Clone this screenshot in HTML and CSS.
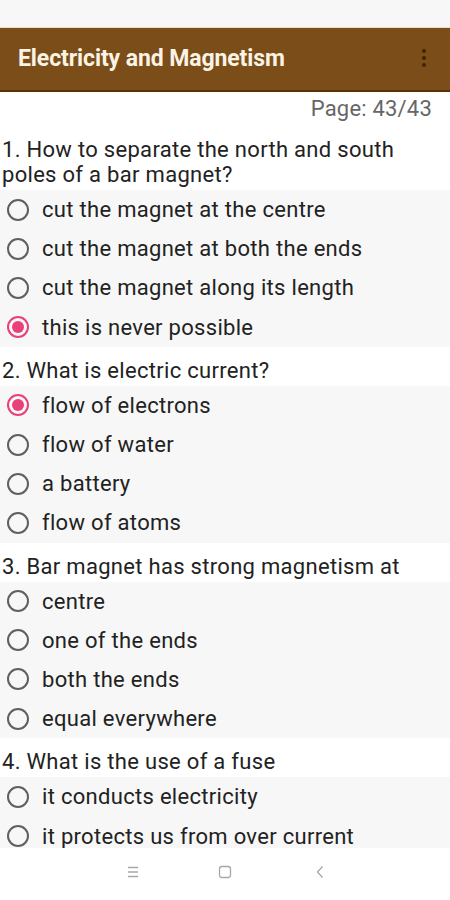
FILE: index.html
```html
<!DOCTYPE html>
<html>
<head>
<meta charset="utf-8">
<link rel="stylesheet" href="styles.css">
</head>
<body>
<div class="screen">
  <div class="statusbar"></div>
  <div class="toolbar">
    <div class="title">Electricity and Magnetism</div>
    <div class="menu"><span></span><span></span><span></span></div>
  </div>
  <div class="content">
    <div class="page">Page: 43/43</div>

    <div class="question">1. How to separate the north and south poles of a bar magnet?</div>
    <div class="options">
      <div class="option"><span class="radio"></span><span class="label">cut the magnet at the centre</span></div>
      <div class="option"><span class="radio"></span><span class="label">cut the magnet at both the ends</span></div>
      <div class="option"><span class="radio"></span><span class="label">cut the magnet along its length</span></div>
      <div class="option"><span class="radio checked"></span><span class="label">this is never possible</span></div>
    </div>

    <div class="question">2. What is electric current?</div>
    <div class="options">
      <div class="option"><span class="radio checked"></span><span class="label">flow of electrons</span></div>
      <div class="option"><span class="radio"></span><span class="label">flow of water</span></div>
      <div class="option"><span class="radio"></span><span class="label">a battery</span></div>
      <div class="option"><span class="radio"></span><span class="label">flow of atoms</span></div>
    </div>

    <div class="question">3. Bar magnet has strong magnetism at</div>
    <div class="options">
      <div class="option"><span class="radio"></span><span class="label">centre</span></div>
      <div class="option"><span class="radio"></span><span class="label">one of the ends</span></div>
      <div class="option"><span class="radio"></span><span class="label">both the ends</span></div>
      <div class="option"><span class="radio"></span><span class="label">equal everywhere</span></div>
    </div>

    <div class="question">4. What is the use of a fuse</div>
    <div class="options">
      <div class="option"><span class="radio"></span><span class="label">it conducts electricity</span></div>
      <div class="option"><span class="radio"></span><span class="label">it protects us from over current</span></div>
    </div>
  </div>
  <div class="navbar">
    <svg class="nav-icon" width="20" height="20" viewBox="0 0 20 20"><path d="M5 5.5h10M5 10h10M5 14.5h10" stroke="#a8a8a8" stroke-width="1.3" fill="none"/></svg>
    <svg class="nav-icon" width="20" height="20" viewBox="0 0 20 20"><rect x="4.5" y="4.5" width="11" height="11" rx="2.5" stroke="#a8a8a8" stroke-width="1.3" fill="none"/></svg>
    <svg class="nav-icon back" width="20" height="20" viewBox="0 0 20 20"><path d="M12.5 4.5L7.5 10l5 5.5" stroke="#a8a8a8" stroke-width="1.3" fill="none"/></svg>
  </div>
</div>
</body>
</html>
```

FILE: styles.css
```css
* { box-sizing: border-box; }
html, body { margin: 0; padding: 0; background: #ffffff; }
body { font-family: Roboto, "Noto Sans", Arial, sans-serif; }

.screen {
  width: 450px;
  height: 900px;
  display: flex;
  flex-direction: column;
  overflow: hidden;
}

.statusbar {
  height: 28px;
  flex: none;
  background: #f7f7f7;
  border-bottom: 1px solid #f3ddc8;
}

.toolbar {
  height: 64px;
  flex: none;
  background: #7a4d19;
  border-bottom: 2px solid #573305;
  display: flex;
  align-items: center;
  justify-content: space-between;
  padding: 0 18px 2px 18px;
}

.title {
  color: #fbf3e4;
  font-size: 23px;
  font-weight: 700;
  letter-spacing: -0.1px;
}

.menu {
  display: flex;
  flex-direction: column;
  gap: 3px;
  padding-right: 6px;
}
.menu span {
  width: 4px;
  height: 4px;
  border-radius: 50%;
  background: #3e2304;
}

.content {
  flex: 1;
  overflow: hidden;
  background: #ffffff;
}

.page {
  text-align: right;
  color: #666666;
  font-size: 22px;
  letter-spacing: 0.2px;
  line-height: 24px;
  padding: 5px 18px 5px 0;
}

.question {
  color: #222222;
  font-size: 22px;
  letter-spacing: 0.3px;
  line-height: 25px;
  padding: 11px 6px 3px 2px;
  background: #ffffff;
}

.options {
  background: #f7f7f7;
}

.option {
  height: 39.2px;
  display: flex;
  align-items: center;
  padding-left: 7px;
}

.radio {
  width: 22px;
  height: 22px;
  border-radius: 50%;
  border: 2px solid #5f5f5f;
  flex: none;
  position: relative;
}
.radio.checked {
  border-color: #e8407a;
}
.radio.checked::after {
  content: "";
  position: absolute;
  left: 3px;
  top: 3px;
  width: 12px;
  height: 12px;
  border-radius: 50%;
  background: #e8407a;
}

.label {
  margin-left: 13px;
  font-size: 22px;
  letter-spacing: 0.3px;
  color: #222222;
}

.navbar {
  height: 52px;
  flex: none;
  background: #ffffff;
  display: flex;
  align-items: center;
  justify-content: flex-start;
  gap: 72px;
  padding-left: 123px;
  padding-bottom: 4px;
}
.nav-icon { display: block; }
.nav-icon.back { margin-left: 3px; }
```
